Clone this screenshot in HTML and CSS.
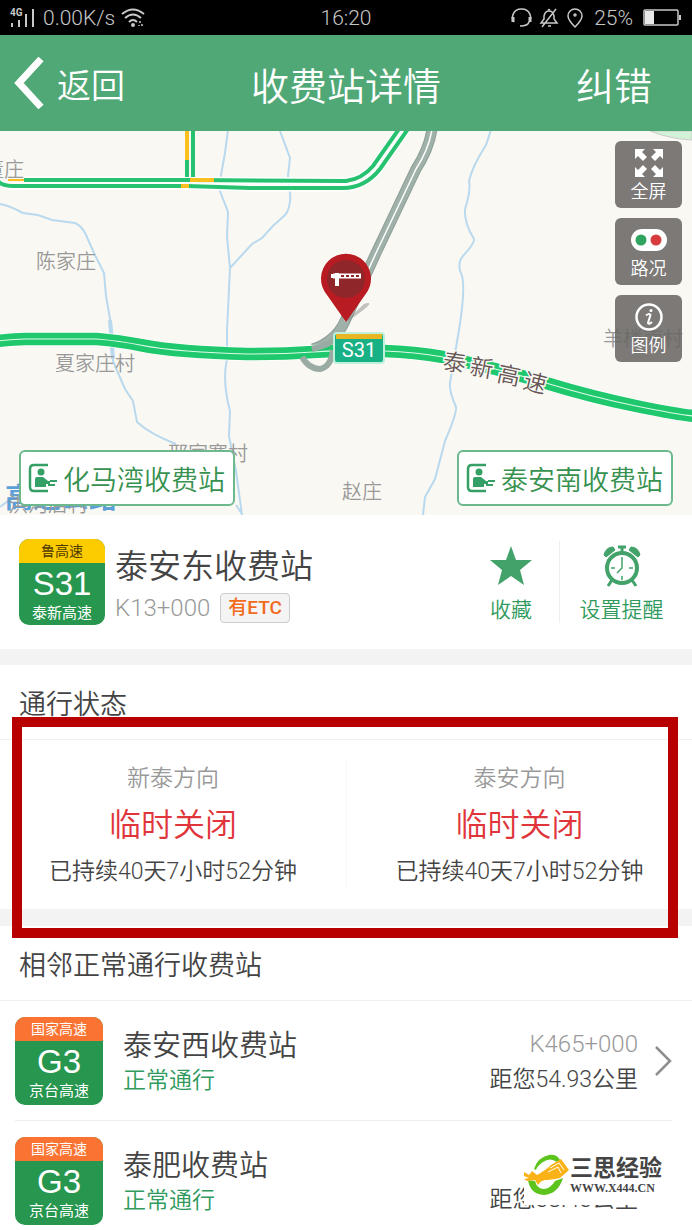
FILE: index.html
```html
<!DOCTYPE html>
<html lang="zh-CN">
<head>
    <meta charset="UTF-8">
    <meta name="viewport" content="width=device-width, initial-scale=1.0">
    <title>收费站详情</title>
    <link rel="stylesheet" href="styles.css">
</head>
<body>
    <div class="app">
        <!-- Phone status bar -->
        <div class="status-bar">
            <div class="status-left">
                <svg width="27" height="20" viewBox="0 0 27 20" fill="#c8c8c8">
                    <text x="0" y="8" class="net-text">4G</text>
                    <rect x="1" y="15" width="2" height="4"/>
                    <rect x="8" y="12" width="2" height="7"/>
                    <rect x="15" y="6" width="2" height="13"/>
                    <rect x="22" y="1" width="2" height="18"/>
                </svg>
                <span class="speed">0.00K/s</span>
                <svg width="24" height="20" viewBox="0 0 24 20" fill="none" stroke="#c8c8c8" stroke-width="2">
                    <path d="M1 6Q12 -3 23 6M4 10Q12 3 20 10M8 14Q12 10 16 14"/>
                    <circle cx="12" cy="17" r="1"/>
                    <path d="M19 13v2M21 16v2M18 17v1" stroke-width="1.5"/>
                </svg>
            </div>
            <div class="status-time">16:20</div>
            <div class="status-right">
                <svg width="21" height="20" viewBox="0 0 21 20" fill="none" stroke="#c8c8c8" stroke-width="1.5">
                    <path d="M3 14C0 11 1 1 10.500 1S21 11 18 14"/>
                    <path d="M2 9v5M19 9v5" stroke-width="3"/>
                    <path d="M18 14q-1 4-9 4"/>
                </svg>
                <svg width="20" height="20" viewBox="0 0 20 20" fill="none" stroke="#c8c8c8" stroke-width="1.5">
                    <path d="M2 15h16l-3-4V8q-1-5-5-5T5 8v3zM9 2q1-1 2 0M9 18h3M17 1L3 19"/>
                </svg>
                <svg width="18" height="20" viewBox="0 0 18 20" fill="none" stroke="#c8c8c8" stroke-width="1.5">
                    <path d="M9 19Q2 12 2 8a7 7 0 0 1 14 0q0 4-7 11z"/>
                    <circle cx="9" cy="7" r="1"/>
                </svg>
                <span class="battery-text">25%</span>
                <svg width="39" height="17" viewBox="0 0 39 17" fill="none" stroke="#c8c8c8" stroke-width="1.5">
                    <rect x="1" y="1" width="34" height="15" rx="1"/>
                    <rect x="2" y="2" width="9" height="13" fill="#e8e8e8" stroke="none"/>
                    <path d="M37 6v5" stroke-width="2"/>
                </svg>
            </div>
        </div>

        <!-- Header -->
        <header class="header">
            <button class="back" type="button">
                <svg width="30" height="52" viewBox="0 0 30 52" fill="none" stroke="#fff" stroke-width="7">
                    <path d="M27 2L5 26L27 50"/>
                </svg>
                返回
            </button>
            <h1>收费站详情</h1>
            <button class="report" type="button">纠错</button>
        </header>

        <!-- Map -->
        <section class="map">
            <svg class="map-canvas" viewBox="0 0 692 384" preserveAspectRatio="xMidYMid slice">
                <path d="M650 0Q670 8 692 9V0z" fill="#d3f2d8" stroke="#ccc"/>

                <!-- rivers -->
                <g class="river">
                    <path d="M0 73Q8 74 23 82L38 84L52 89L75 92Q82 95 86 104L94 122L104 142L106 165L112 199L113 230L118 242L125 258L133 270L137 291Q150 303 176 313"/>
                    <path d="M228 -1L225 22L221 44L220 60L228 81L227 106L230 137L227 200L227 228Q222 250 230 280L229 305L236 340L242 384"/>
                    <path d="M280 0L290 27L288 45Q291 65 290 70Q289 80 285 84L273 95L262 107L252 113L230 137"/>
                    <path d="M491 -1L486 14Q472 36 469 50Q471 60 465 78Q464 92 474 108Q475 112 463 125Q458 130 460 140Q467 150 459 199L450 252Q449 260 456 276Q457 282 445 310L435 348L425 366L423 384"/>
                    <path d="M0 376L8 370M236 374L242 383"/>
                </g>
                <path d="M110 189L113 228" stroke="#b9d9ee" stroke-width="4"/>

                <!-- local roads with traffic -->
                <path d="M-2 51Q12 58 18 55H187L250 57H343Q365 57 380 38L408 -2M24 49H190L346 50Q362 48 373 35L399 -2" fill="none" stroke="#fff" stroke-width="7"/>
                <g class="traffic">
                    <path d="M-2 50Q2 55 13 55H187L250 57H343Q365 57 380 38L408 -2"/>
                    <path d="M24 49H190L346 50Q362 48 373 35L399 -2"/>
                    <path d="M187 0V46M193 0V46"/>
                    <path class="slow" d="M187 0V29M190 49H214M181 55H189"/>
                    <path class="slow" d="M8 49H24" stroke-width="2"/>
                </g>

                <!-- ramp -->
                <g fill="none">
                    <path d="M432 -2Q429 18 416 38L376 122L345 190Q336 210 313 218" stroke="#8c9e96" stroke-width="11"/>
                    <path d="M432 -2Q429 18 416 38L376 122L345 190Q336 210 313 218" stroke="#a0b1aa" stroke-width="9"/>
                    <path d="M432 -2Q429 18 416 38L376 122L345 190" stroke="#fff" stroke-width="1.5"/>
                </g>

                <!-- expressway -->
                <g fill="none">
                    <path d="M-2 210Q15 208 25 208H97Q120 210 140 214T187 220T247 223Q285 223 313 221T384 220Q415 221 443 226Q500 238 546 252T636 275T694 285" stroke="#fff" stroke-width="14"/>
                    <path d="M-2 210Q15 208 25 208H97Q120 210 140 214T187 220T247 223Q285 223 313 221T384 220Q415 221 443 226Q500 238 546 252T636 275T694 285" stroke="#1fc76d" stroke-width="12.5"/>
                    <path d="M-2 210Q15 208 25 208H97Q120 210 140 214T187 220T247 223Q285 223 313 221T384 220Q415 221 443 226Q500 238 546 252T636 275T694 285" stroke="#dcfbe8" stroke-width="1.2"/>
                    <path d="M302 226Q309 238 320 238Q331 236 333 219M312 218Q330 214 338 206" stroke="#9aaba4" stroke-width="6"/>
                </g>

                <!-- place names -->
                <g class="place">
                    <text x="-16" y="46">董庄</text>
                    <text x="36" y="138">陈家庄</text>
                    <text x="55" y="240">夏家庄村</text>
                    <text x="168" y="330">邢家寨村</text>
                    <text x="342" y="368">赵庄</text>
                    <text x="603" y="215">羊楼南村</text>
                </g>
                <text class="place-blue" x="5" y="377">高速公路</text>
                <g class="place">
                    <text x="8" y="381">洪河店村</text>
                </g>
                <g class="road-name">
                    <text transform="translate(442 238) rotate(8)">泰</text>
                    <text transform="translate(469 243) rotate(10)">新</text>
                    <text transform="translate(496 250) rotate(12)">高</text>
                    <text transform="translate(522 257) rotate(14)">速</text>
                </g>

                <!-- road shield -->
                <rect x="334" y="202" width="50" height="30" rx="3" fill="#18b186" stroke="#bff0dc" stroke-width="2"/>
                <path d="M336 203H382V208H336z" fill="#e8b622"/>
                <text class="shield-text" x="359" y="226">S31</text>

                <!-- pin -->
                <path d="M348 188L364 173Q372 170 368 175Q360 182 348 190z" fill="#8a8a8a" opacity=".5"/>
                <path d="M346 191L327 164A25 25 0 1 1 365 164z" fill="#b81c22"/>
                <circle cx="346" cy="148" r="19" fill="#8f2629"/>
                <path d="M331 143H333V147H331zM335 142H339V155H335z" fill="#fff"/>
                <path d="M333 145H361" stroke="#fff" stroke-width="5"/>
                <path d="M341 145H360" stroke="#8f2629" stroke-width="2" stroke-dasharray="3 2"/>
            </svg>

            <div class="map-tools">
                <button type="button">
                    <svg width="28" height="28" viewBox="0 0 28 28" fill="#fff">
                        <path d="M0 0H10L7 3L12 8L8 12L3 7L0 10z"/>
                        <path d="M28 0H18L21 3L16 8L20 12L25 7L28 10z"/>
                        <path d="M0 28H10L7 25L12 20L8 16L3 21L0 18z"/>
                        <path d="M28 28H18L21 25L16 20L20 16L25 21L28 18z"/>
                    </svg>
                    全屏
                </button>
                <button type="button">
                    <svg width="36" height="28" viewBox="0 0 36 28">
                        <rect x="0" y="3" width="36" height="22" rx="11" fill="#fff"/>
                        <circle cx="10" cy="14" r="5.500" fill="#2fa360"/>
                        <circle cx="25" cy="14" r="5.500" fill="#d63c3f"/>
                    </svg>
                    路况
                </button>
                <button type="button">
                    <svg width="28" height="28" viewBox="0 0 28 28" fill="none" stroke="#fff">
                        <circle cx="14" cy="14" r="12.500" stroke-width="2.5"/>
                        <circle cx="16" cy="7.500" r="1.500" fill="#fff" stroke="none"/>
                        <path d="M11 12.500Q14 10 15.500 12L13 20Q14 22 17 19" stroke-width="2"/>
                    </svg>
                    图例
                </button>
            </div>

            <div class="map-stations">
                <button type="button">
                    <svg width="30" height="30" viewBox="0 0 30 30">
                        <path d="M20 2H6Q2 2 2 6V24Q2 28 6 28H20" fill="none" stroke="#35a066" stroke-width="2.5"/>
                        <circle cx="13" cy="9" r="3.500" fill="#35a066"/>
                        <path d="M7 24V16Q7 14 9 14H15L20 18H22V21H18V24z" fill="#35a066"/>
                        <path d="M22 18H29M20 22H27" stroke="#35a066" stroke-width="2"/>
                    </svg>
                    化马湾收费站
                </button>
                <button type="button">
                    <svg width="30" height="30" viewBox="0 0 30 30">
                        <path d="M20 2H6Q2 2 2 6V24Q2 28 6 28H20" fill="none" stroke="#35a066" stroke-width="2.5"/>
                        <circle cx="13" cy="9" r="3.500" fill="#35a066"/>
                        <path d="M7 24V16Q7 14 9 14H15L20 18H22V21H18V24z" fill="#35a066"/>
                        <path d="M22 18H29M20 22H27" stroke="#35a066" stroke-width="2"/>
                    </svg>
                    泰安南收费站
                </button>
            </div>
        </section>

        <!-- Station info -->
        <section class="station">
            <div class="badge province">
                <div class="badge-top">鲁高速</div>
                <div class="badge-code">S31</div>
                <div class="badge-name">泰新高速</div>
            </div>
            <div class="station-info">
                <h2>泰安东收费站</h2>
                <div class="station-meta">
                    <span class="stake">K13+000</span>
                    <span class="etc">有ETC</span>
                </div>
            </div>
            <div class="actions">
                <button class="favorite" type="button">
                    <svg width="42" height="42" viewBox="0 0 42 42" fill="#42a269">
                        <path d="M21 1L26 15L42 15L30 25L34 40L21 31L8 40L12 25L0 15L16 15z"/>
                    </svg>
                    收藏
                </button>
                <button class="remind" type="button">
                    <svg width="42" height="42" viewBox="0 0 42 42" fill="none" stroke="#42a269">
                        <circle cx="21" cy="23" r="15" stroke-width="4"/>
                        <path d="M17 2H25M21 2V8" stroke-width="3"/>
                        <path d="M3 10Q5 2 12 2L14 5L5 12zM39 10Q37 2 30 2L28 5L37 12z" fill="#42a269"/>
                        <path d="M11 35L7 41M31 35L35 41" stroke-width="3"/>
                        <path d="M21 12V23L16 28M10 23H14M28 23H32M21 31V35" stroke-width="1.5"/>
                    </svg>
                    设置提醒
                </button>
            </div>
        </section>

        <!-- Traffic status -->
        <section class="traffic-status">
            <h3>通行状态</h3>
            <div class="directions">
                <div class="direction">
                    <div class="direction-name">新泰方向</div>
                    <div class="direction-state">临时关闭</div>
                    <div class="direction-time">已持续40天7小时52分钟</div>
                </div>
                <div class="direction">
                    <div class="direction-name">泰安方向</div>
                    <div class="direction-state">临时关闭</div>
                    <div class="direction-time">已持续40天7小时52分钟</div>
                </div>
            </div>
            <div class="highlight"></div>
        </section>

        <!-- Nearby stations -->
        <section class="nearby">
            <h3>相邻正常通行收费站</h3>
            <ul>
                <li>
                    <div class="badge national">
                        <div class="badge-top">国家高速</div>
                        <div class="badge-code">G3</div>
                        <div class="badge-name">京台高速</div>
                    </div>
                    <div class="nearby-info">
                        <div class="nearby-name">泰安西收费站</div>
                        <div class="nearby-state">正常通行</div>
                    </div>
                    <div class="nearby-distance">
                        <div class="stake">K465+000</div>
                        <div>距您54.93公里</div>
                    </div>
                    <svg width="18" height="32" viewBox="0 0 18 32" fill="none" stroke="#8e8e8e" stroke-width="2.5">
                        <path d="M2 2L16 16L2 30"/>
                    </svg>
                </li>
                <li>
                    <div class="badge national">
                        <div class="badge-top">国家高速</div>
                        <div class="badge-code">G3</div>
                        <div class="badge-name">京台高速</div>
                    </div>
                    <div class="nearby-info">
                        <div class="nearby-name">泰肥收费站</div>
                        <div class="nearby-state">正常通行</div>
                    </div>
                    <div class="nearby-distance">
                        <div class="stake">&nbsp;</div>
                        <div>距您38.43公里</div>
                    </div>
                    <svg width="18" height="32" viewBox="0 0 18 32" fill="none" stroke="#f4f4f4" stroke-width="2">
                        <path d="M2 2L16 16L2 30"/>
                    </svg>
                    <div class="watermark">
                        <svg width="46" height="42" viewBox="0 0 46 42">
                            <path d="M10 15Q14 3 25 1Q33 0 36 6L33 8Q26 3 19 8Q13 12 12 16z" fill="#5cc41c"/>
                            <path d="M4 26Q6 40 20 41Q34 40 39 24L31 27Q27 34 20 35Q13 35 11 27z" fill="#5cc41c"/>
                            <path d="M0 18L5 21L8 17L13 21Q22 16 27 11L37 5L45 16L36 24Q26 26 21 26Q16 27 14 31L11 26L3 27L0 25L5 24L0 22z" fill="#fbb216"/>
                            <path d="M26 14L35 9L40 16M24 18L34 13L37 19" fill="none" stroke="#fff"/>
                        </svg>
                        <div>
                            <div class="watermark-name">三思经验</div>
                            <div class="watermark-url">WWW.X444.CN</div>
                        </div>
                    </div>
                </li>
            </ul>
        </section>
    </div>
</body>
</html>
```

FILE: styles.css
```css
* {
    box-sizing: border-box;
}

body {
    margin: 0;
    font-family: Roboto, "Noto Sans CJK SC", sans-serif;
    font-weight: 350;
    color: #444;
    background: #fff;
}

h1, h2, h3, ul {
    margin: 0;
    padding: 0;
    font-weight: 350;
    list-style: none;
}

button {
    padding: 0;
    border: none;
    background: none;
    font: inherit;
    color: inherit;
    cursor: pointer;
}

svg {
    display: block;
    flex-shrink: 0;
}

.app {
    height: 100vh;
    overflow: hidden;
}

/* Status bar */
.status-bar {
    display: grid;
    grid-template-columns: 1fr auto 1fr;
    align-items: center;
    height: 35px;
    padding: 0 10px;
    background: #000;
    color: #c8c8c8;
    font-size: 21px;
}

.status-left, .status-right {
    display: flex;
    align-items: center;
}

.status-left {
    gap: 6px;
}

.status-right {
    justify-content: flex-end;
    gap: 7px;
}

.battery-text {
    padding: 0 3px;
}

.net-text {
    font-size: 10px;
    font-weight: 700;
}

/* Header */
.header {
    display: grid;
    grid-template-columns: 1fr auto 1fr;
    align-items: center;
    height: 96px;
    padding: 0 40px 0 14px;
    background: #50a876;
    color: #fff;
}

.header h1 {
    padding-left: 26px;
    font-size: 38px;
}

.back {
    display: flex;
    align-items: center;
    gap: 13px;
    font-size: 34px;
}

.report {
    justify-self: end;
    font-size: 38px;
}

/* Map */
.map {
    position: relative;
    height: 384px;
    overflow: hidden;
    background: #faf8f3;
}

.map-canvas {
    width: 100%;
    height: 100%;
}

.river {
    fill: none;
    stroke: #b9d9ee;
    stroke-width: 2;
}

.traffic {
    fill: none;
    stroke: #27c270;
    stroke-width: 4;
}

.slow {
    stroke: #fbc01f;
}

.place {
    font-size: 20px;
    fill: #999;
}

.place-blue {
    font-size: 28px;
    font-weight: 700;
    fill: #5d9fd8;
}

.road-name {
    font-size: 23px;
    fill: #655;
    stroke: #faf8f3;
    stroke-width: 3px;
    paint-order: stroke;
}

.shield-text {
    font-size: 20px;
    font-weight: 400;
    fill: #fff;
    text-anchor: middle;
}

.map-tools {
    position: absolute;
    top: 10px;
    right: 10px;
    display: flex;
    flex-direction: column;
    gap: 10px;
}

.map-tools button {
    display: flex;
    flex-direction: column;
    align-items: center;
    justify-content: center;
    gap: 5px;
    width: 67px;
    height: 67px;
    padding-top: 2px;
    border-radius: 6px;
    background: rgba(104, 102, 100, 0.87);
    color: #fff;
    font-size: 18px;
    line-height: 20px;
}

.map-stations {
    position: absolute;
    left: 19px;
    right: 19px;
    bottom: 9px;
    display: flex;
    justify-content: space-between;
}

.map-stations button {
    display: flex;
    align-items: center;
    gap: 5px;
    height: 56px;
    padding: 0 8px 0 7px;
    border: 2px solid #6bb98d;
    border-radius: 6px;
    background: #fff;
    color: #37914f;
    font-size: 27px;
}

/* Station info */
.station {
    display: flex;
    align-items: center;
    gap: 10px;
    height: 134px;
    padding: 0 9px 0 19px;
}

.badge {
    display: flex;
    flex-direction: column;
    width: 88px;
    height: 88px;
    border-radius: 10px;
    overflow: hidden;
    background: #27964f;
    color: #fff;
    text-align: center;
    font-weight: 400;
}

.badge-top {
    height: 24px;
    font-size: 14px;
    line-height: 25px;
}

.badge-code {
    font-family: "Liberation Sans", sans-serif;
    font-size: 33px;
    line-height: 42px;
}

.badge-name {
    font-size: 15px;
    line-height: 16px;
}

.province {
    width: 86px;
    height: 86px;
}

.province .badge-top {
    background: #fccb00;
    color: #4d3a00;
}

.national .badge-top {
    background: #fa7332;
}

.station-info {
    flex: 1;
}

.station-info h2 {
    font-size: 33px;
    line-height: 52px;
}

.station-meta {
    display: flex;
    align-items: center;
    gap: 10px;
}

.stake {
    color: #999;
    font-size: 24px;
}

.etc {
    padding: 0 7px;
    border: 1px solid #ccc;
    border-radius: 4px;
    background: #f4f4f4;
    color: #f26a1b;
    font-size: 19px;
    font-weight: 500;
    line-height: 28px;
}

.actions {
    display: flex;
}

.actions button {
    display: flex;
    flex-direction: column;
    align-items: center;
    gap: 10px;
    padding-top: 4px;
    color: #2f9a5c;
    font-size: 21px;
    line-height: 26px;
}

.favorite {
    width: 96px;
}

.actions .remind {
    width: 124px;
    border-left: 1px solid #eee;
}

/* Section titles */
h3 {
    padding: 6px 19px 0;
    border-bottom: 1px solid #f0f0f0;
    font-size: 27px;
    line-height: 68px;
}

/* Traffic status */
.traffic-status {
    position: relative;
    border-top: 16px solid #f3f3f3;
    border-bottom: 17px solid #f3f3f3;
}

.directions {
    display: grid;
    grid-template-columns: 1fr 1fr;
    padding: 21px 0 19px;
}

.direction {
    text-align: center;
}

.direction + .direction {
    border-left: 1px solid #f7f7f7;
}

.direction-name {
    color: #999;
    font-size: 23px;
    line-height: 36px;
}

.direction-state {
    color: #e0353a;
    font-size: 32px;
    line-height: 57px;
}

.direction-time {
    font-size: 23px;
    line-height: 36px;
}

/* Red frame round the closed directions */
.highlight {
    position: absolute;
    top: 52px;
    right: 14px;
    bottom: -29px;
    left: 12px;
    border: 10px solid #b90000;
    pointer-events: none;
}

/* Nearby stations */
.nearby li {
    position: relative;
    display: flex;
    align-items: center;
    height: 120px;
    margin: 0 20px 0 15px;
    border-bottom: 1px solid #eee;
}

.nearby-info {
    flex: 1;
    padding: 3px 0 0 20px;
}

.nearby-name {
    font-size: 29px;
    line-height: 38px;
}

.nearby-state {
    color: #2f9a5c;
    font-size: 23px;
    line-height: 32px;
}

.nearby-distance {
    padding: 3px 16px 0 0;
    font-size: 23px;
    line-height: 35px;
    text-align: right;
}

.watermark {
    position: absolute;
    top: 24px;
    right: 0;
    display: flex;
    align-items: center;
    width: 148px;
    height: 60px;
    background: #fff;
}

.watermark-name {
    font-size: 23px;
    font-weight: 700;
    line-height: 26px;
}

.watermark-url {
    font-family: "Liberation Serif", serif;
    font-size: 12px;
    font-weight: 700;
    line-height: 12px;
}
```
